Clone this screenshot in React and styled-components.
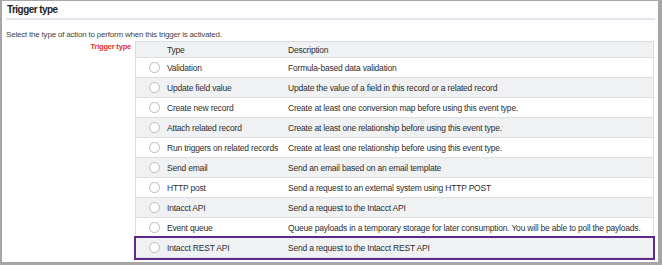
import React from "react";
import styled, { createGlobalStyle } from "styled-components";

const GlobalStyle = createGlobalStyle`
  html, body {
    margin: 0;
    padding: 0;
    background: #ffffff;
  }
  body {
    font-family: "Liberation Sans", Arial, sans-serif;
    color: #333;
  }
`;

const Frame = styled.div`
  box-sizing: border-box;
  width: 662px;
  height: 265px;
  border-style: solid;
  border-color: #a6a6a6;
  border-width: 1px 4px 3px 2px;
  padding: 3px 3px 0 4px;
  overflow: hidden;
`;

const SectionTitle = styled.div`
  font-size: 10px;
  font-weight: bold;
  letter-spacing: -0.55px;
  color: #222;
  line-height: 11px;
  padding: 0 0 3px 1px;
  border-bottom: 2px solid #e2e6ec;
`;

const Hint = styled.div`
  font-size: 8px;
  letter-spacing: -0.2px;
  color: #444;
  line-height: 10px;
  margin-top: 10px;
`;

const FormRow = styled.div`
  display: grid;
  grid-template-columns: 125px 1fr;
  gap: 4px;
  margin-top: 1px;
  padding-right: 1px;
`;

const FieldLabel = styled.div`
  text-align: right;
  font-size: 7.5px;
  font-weight: bold;
  letter-spacing: -0.2px;
  color: #e5302a;
  line-height: 10px;
  padding-top: 1px;
`;

const Table = styled.div`
  border: 1px solid #d9dde0;
  border-bottom: none;
`;

const Row = styled.div`
  display: grid;
  grid-template-columns: 27px 121px 1fr;
  align-items: center;
  height: ${({ $head }) => ($head ? "15px" : "19px")};
  background: ${({ $shade }) => ($shade ? "#eff1f3" : "#ffffff")};
  border-bottom: 1px solid #dcdfe2;
  font-size: 8.5px;
  letter-spacing: -0.2px;
  color: #2e2e2e;
  white-space: nowrap;
  outline: ${({ $selected }) => ($selected ? "2px solid #5d2a8c" : "none")};
`;

const Cell = styled.div`
  padding-left: 4px;
  overflow: hidden;
`;

const RadioCell = styled.div`
  display: flex;
  justify-content: flex-end;
  padding-right: 3px;
`;

const Radio = styled.span`
  box-sizing: border-box;
  width: 11px;
  height: 11px;
  border-radius: 50%;
  border: 1px solid #b9bcbf;
  background: #fff;
`;

const triggers = [
  ["Validation", "Formula-based data validation"],
  ["Update field value", "Update the value of a field in this record or a related record"],
  ["Create new record", "Create at least one conversion map before using this event type."],
  ["Attach related record", "Create at least one relationship before using this event type."],
  ["Run triggers on related records", "Create at least one relationship before using this event type."],
  ["Send email", "Send an email based on an email template"],
  ["HTTP post", "Send a request to an external system using HTTP POST"],
  ["Intacct API", "Send a request to the Intacct API"],
  [
    "Event queue",
    "Queue payloads in a temporary storage for later consumption. You will be able to poll the payloads.",
  ],
  ["Intacct REST API", "Send a request to the Intacct REST API"],
];

export default function App() {
  return (
    <>
      <GlobalStyle />
      <Frame>
        <SectionTitle>Trigger type</SectionTitle>
        <Hint>Select the type of action to perform when this trigger is activated.</Hint>
        <FormRow>
          <FieldLabel>Trigger type</FieldLabel>
          <Table>
            <Row $head $shade>
              <Cell />
              <Cell>Type</Cell>
              <Cell>Description</Cell>
            </Row>
            {triggers.map(([type, desc], i) => (
              <Row key={type} $shade={i % 2 === 1} $selected={i === triggers.length - 1}>
                <RadioCell>
                  <Radio />
                </RadioCell>
                <Cell>{type}</Cell>
                <Cell>{desc}</Cell>
              </Row>
            ))}
          </Table>
        </FormRow>
      </Frame>
    </>
  );
}
